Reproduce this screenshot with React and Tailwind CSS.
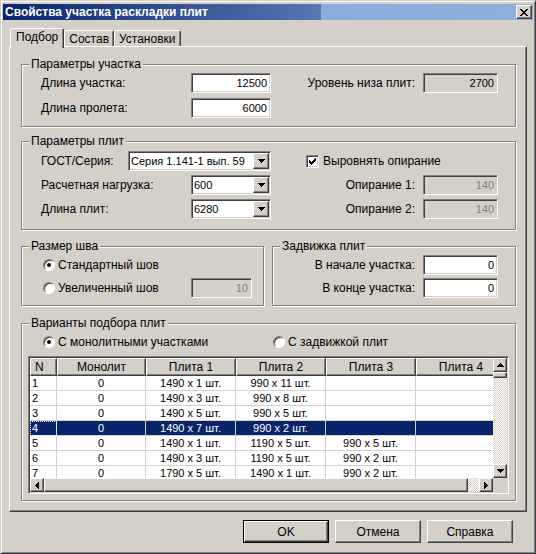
import React from "react";

// win2000 bevels
const sunken =
  "border border-t-[#808080] border-l-[#808080] border-r-white border-b-white shadow-[inset_1px_1px_0_#404040,inset_-1px_-1px_0_#d4d0c8]";
const raised =
  "border border-t-white border-l-white border-r-[#404040] border-b-[#404040] shadow-[inset_-1px_-1px_0_#808080]";
const etched = "border border-[#808080] shadow-[inset_1px_1px_0_#fff,1px_1px_0_#fff]";
const checker =
  "bg-[image:repeating-conic-gradient(#fff_0_25%,#d4d0c8_0_50%)] bg-size-[2px_2px] bg-[length:2px_2px]";

const cols = ["w-[27px]", "w-[89px]", "w-[90px]", "w-[90px]", "w-[90px]", "w-[90px]"];
const heads = ["N", "Монолит", "Плита 1", "Плита 2", "Плита 3", "Плита 4"];
const rows = [
  ["1", "0", "1490 x 1 шт.", "990 x 11 шт.", "", ""],
  ["2", "0", "1490 x 3 шт.", "990 x 8 шт.", "", ""],
  ["3", "0", "1490 x 5 шт.", "990 x 5 шт.", "", ""],
  ["4", "0", "1490 x 7 шт.", "990 x 2 шт.", "", ""],
  ["5", "0", "1490 x 1 шт.", "1190 x 5 шт.", "990 x 5 шт.", ""],
  ["6", "0", "1490 x 3 шт.", "1190 x 5 шт.", "990 x 2 шт.", ""],
  ["7", "0", "1790 x 5 шт.", "1490 x 1 шт.", "990 x 2 шт.", ""],
];

const Group = ({ title, className, children }) => (
  <div className={`relative ${etched} ${className}`}>
    <span className="absolute left-[7px] -top-[8px] bg-[#d4d0c8] px-[2px] leading-[14px]">
      {title}
    </span>
    {children}
  </div>
);

const Field = ({ value, w, gray, dim }) => (
  <div
    className={`${sunken} ${w} shrink-0 h-[20px] flex items-center justify-end pr-[3px] text-[11px] ${
      gray ? "bg-[#d4d0c8]" : "bg-white"
    } ${dim ? "text-[#808080]" : "text-black"}`}
  >
    {value}
  </div>
);

const Combo = ({ value, w }) => (
  <div className={`${sunken} ${w} shrink-0 h-[20px] p-[1px] bg-white flex items-center`}>
    <span className="flex-1 pl-[1px] text-[11px] whitespace-nowrap overflow-hidden">{value}</span>
    <div className={`${raised} w-[16px] h-[16px] bg-[#d4d0c8] flex items-center justify-center`}>
      <svg width="7" height="4" viewBox="0 0 7 4" shapeRendering="crispEdges">
        <path d="M0 0h7v1H0z M1 1h5v1H1z M2 2h3v1H2z M3 3h1v1H3z" fill="#000" />
      </svg>
    </div>
  </div>
);

const Check = () => (
  <div className={`${sunken} w-[13px] h-[13px] shrink-0 bg-white flex items-center justify-center`}>
    <svg width="7" height="7" viewBox="0 0 7 7" shapeRendering="crispEdges">
      <path
        d="M0 2h1v3H0z M1 3h1v3H1z M2 4h1v3H2z M3 3h1v3H3z M4 2h1v3H4z M5 1h1v3H5z M6 0h1v3H6z"
        fill="#000"
      />
    </svg>
  </div>
);

const Radio = ({ on }) => (
  <div className="w-[12px] h-[12px] shrink-0 rounded-full bg-white border border-t-[#808080] border-l-[#808080] border-r-white border-b-white shadow-[inset_1px_1px_0_#404040] flex items-center justify-center">
    {on && <div className="w-[4px] h-[4px] rounded-full bg-black" />}
  </div>
);

const Arrow = ({ dir }) => {
  const d = {
    up: "M3 0h1v1H3z M2 1h3v1H2z M1 2h5v1H1z M0 3h7v1H0z",
    down: "M0 0h7v1H0z M1 1h5v1H1z M2 2h3v1H2z M3 3h1v1H3z",
    left: "M3 0h1v7H3z M2 1h1v5H2z M1 2h1v3H1z M0 3h1v1H0z",
    right: "M0 0h1v7H0z M1 1h1v5H1z M2 2h1v3H2z M3 3h1v1H3z",
  };
  const vert = dir === "up" || dir === "down";
  return (
    <div className={`${raised} w-[14px] h-[14px] shrink-0 bg-[#d4d0c8] flex items-center justify-center`}>
      <svg
        width={vert ? 7 : 4}
        height={vert ? 4 : 7}
        viewBox={vert ? "0 0 7 4" : "0 0 4 7"}
        shapeRendering="crispEdges"
      >
        <path d={d[dir]} fill="#000" />
      </svg>
    </div>
  );
};

const Button = ({ children, def }) =>
  def ? (
    <div className="border border-black w-[86px] h-[23px]">
      <div className={`${raised} w-full h-full flex items-center justify-center`}>{children}</div>
    </div>
  ) : (
    <div className={`${raised} w-[86px] h-[23px] flex items-center justify-center`}>{children}</div>
  );

export default function App() {
  return (
    <div className="w-[536px] h-[554px] bg-[#d4d0c8] border border-t-[#d4d0c8] border-l-[#d4d0c8] border-r-[#404040] border-b-[#404040] shadow-[inset_1px_1px_0_#fff,inset_-1px_-1px_0_#808080] px-[2px] pt-[3px] flex flex-col text-[12px] leading-[14px] text-black font-['Liberation_Sans',Arial,sans-serif] select-none">
      {/* title bar */}
      <div className="h-[16px] flex items-center pl-[2px] pr-[1px] bg-[image:linear-gradient(to_right,#0a246a_0%,#5878b0_60%,#8aacdc_60%,#8cafde_100%)]">
        <span className="flex-1 text-white font-bold text-[12px]">Свойства участка раскладки плит</span>
        <div className={`${raised} w-[16px] h-[14px] bg-[#d4d0c8] flex items-center justify-center`}>
          <svg width="8" height="7" viewBox="0 0 8 7" shapeRendering="crispEdges">
            <path
              d="M0 0h2v1H0z M6 0h2v1H6z M1 1h2v1H1z M5 1h2v1H5z M2 2h4v1H2z M3 3h2v1H3z M2 4h4v1H2z M1 5h2v1H1z M5 5h2v1H5z M0 6h2v1H0z M6 6h2v1H6z"
              fill="#000"
            />
          </svg>
        </div>
      </div>

      <div className="px-[6px] mt-[8px]">
        {/* tabs */}
        <div className="flex items-end h-[18px] pl-[1px]">
          <div className="relative z-10 -mb-[2px] h-[20px] px-[5px] pt-[1px] bg-[#d4d0c8] border-t border-l border-r border-t-white border-l-white border-r-[#404040] shadow-[inset_-1px_0_0_#808080] rounded-t-[2px]">
            Подбор
          </div>
          <div className="h-[16px] px-[4px] pt-[1px] border-t border-l border-r border-t-white border-l-white border-r-[#404040] shadow-[inset_-1px_0_0_#808080] rounded-t-[2px]">
            Состав
          </div>
          <div className="h-[16px] px-[4px] pt-[1px] border-t border-l border-r border-t-white border-l-white border-r-[#404040] shadow-[inset_-1px_0_0_#808080] rounded-t-[2px]">
            Установки
          </div>
        </div>

        {/* tab page */}
        <div className="w-[518px] h-[466px] border border-t-white border-l-white border-r-[#404040] border-b-[#404040] shadow-[inset_-1px_-1px_0_#808080] pl-[11px] pt-[17px]">
          <Group title="Параметры участка" className="w-[495px] h-[63px] pt-[8px] pl-[19px]">
            <div className="flex items-center h-[20px]">
              <span className="w-[150px] shrink-0">Длина участка:</span>
              <Field w="w-[80px]" value="12500" />
              <span className="w-[152px] shrink-0 text-right pr-[8px]">Уровень низа плит:</span>
              <Field w="w-[75px]" value="2700" gray />
            </div>
            <div className="flex items-center h-[20px] mt-[5px]">
              <span className="w-[150px] shrink-0">Длина пролета:</span>
              <Field w="w-[80px]" value="6000" />
            </div>
          </Group>

          <Group title="Параметры плит" className="mt-[14px] w-[495px] h-[89px] pt-[9px] pl-[19px]">
            <div className="flex items-center h-[20px]">
              <span className="w-[87px] shrink-0">ГОСТ/Серия:</span>
              <Combo w="w-[143px]" value="Серия 1.141-1 вып. 59" />
              <div className="w-[35px] shrink-0" />
              <Check />
              <span className="ml-[4px]">Выровнять опирание</span>
            </div>
            <div className="flex items-center h-[20px] mt-[4px]">
              <span className="w-[150px] shrink-0">Расчетная нагрузка:</span>
              <Combo w="w-[80px]" value="600" />
              <span className="w-[152px] shrink-0 text-right pr-[8px]">Опирание 1:</span>
              <Field w="w-[75px]" value="140" gray dim />
            </div>
            <div className="flex items-center h-[20px] mt-[4px]">
              <span className="w-[150px] shrink-0">Длина плит:</span>
              <Combo w="w-[80px]" value="6280" />
              <span className="w-[152px] shrink-0 text-right pr-[8px]">Опирание 2:</span>
              <Field w="w-[75px]" value="140" gray dim />
            </div>
          </Group>

          <div className="mt-[16px] flex gap-[8px]">
            <Group title="Размер шва" className="w-[243px] h-[60px] pt-[8px] pl-[21px]">
              <div className="flex items-center h-[20px]">
                <Radio on />
                <span className="ml-[3px]">Стандартный шов</span>
              </div>
              <div className="flex items-center h-[20px] mt-[3px]">
                <Radio />
                <span className="ml-[3px] w-[133px] shrink-0">Увеличенный шов</span>
                <Field w="w-[61px]" value="10" gray dim />
              </div>
            </Group>
            <Group title="Задвижка плит" className="w-[244px] h-[60px] pt-[8px]">
              <div className="flex items-center h-[20px]">
                <span className="w-[150px] shrink-0 text-right pr-[8px]">В начале участка:</span>
                <Field w="w-[75px]" value="0" />
              </div>
              <div className="flex items-center h-[20px] mt-[3px]">
                <span className="w-[150px] shrink-0 text-right pr-[8px]">В конце участка:</span>
                <Field w="w-[75px]" value="0" />
              </div>
            </Group>
          </div>

          <Group title="Варианты подбора плит" className="mt-[17px] w-[495px] h-[178px] pt-[11px] pl-[6px]">
            <div className="flex items-center h-[14px] pl-[15px]">
              <div className="w-[230px] shrink-0 flex items-center">
                <Radio on />
                <span className="ml-[3px]">С монолитными участками</span>
              </div>
              <div className="flex items-center">
                <Radio />
                <span className="ml-[3px]">С задвижкой плит</span>
              </div>
            </div>

            {/* list view */}
            <div
              className={`${sunken} mt-[7px] w-[481px] h-[138px] bg-white p-[1px] grid grid-cols-[1fr_14px] grid-rows-[1fr_14px]`}
            >
              <div className="overflow-hidden bg-white">
                <div className="flex h-[18px]">
                  {heads.map((h, i) => (
                    <div
                      key={h}
                      className={`${raised} ${cols[i]} shrink-0 bg-[#d4d0c8] flex items-center ${
                        i === 0 ? "pl-[4px]" : "justify-center"
                      }`}
                    >
                      {h}
                    </div>
                  ))}
                </div>
                {rows.map((r, ri) => {
                  const sel = ri === 3;
                  return (
                    <div
                      key={ri}
                      className={`flex h-[15px] text-[11px] leading-[13px] ${
                        sel ? "bg-[#0a246a] text-white" : "bg-white text-black"
                      }`}
                    >
                      {r.map((c, ci) => (
                        <div
                          key={ci}
                          className={`${cols[ci]} shrink-0 border-r border-b border-[#d4d0c8] flex items-center whitespace-nowrap ${
                            ci === 0 ? "pl-[2px]" : "justify-center"
                          } ${sel && ci === 0 ? "outline-1 outline-dotted outline-white -outline-offset-1" : ""}`}
                        >
                          {c}
                        </div>
                      ))}
                    </div>
                  );
                })}
              </div>

              <div className="flex flex-col">
                <Arrow dir="up" />
                <div className={`${raised} h-[6px] shrink-0 bg-[#d4d0c8]`} />
                <div className={`flex-1 ${checker}`} />
                <Arrow dir="down" />
              </div>

              <div className="flex">
                <Arrow dir="left" />
                <div className={`${raised} w-[424px] shrink-0 bg-[#d4d0c8]`} />
                <div className={`flex-1 ${checker}`} />
                <Arrow dir="right" />
              </div>
              <div className="bg-[#d4d0c8]" />
            </div>
          </Group>
        </div>

        <div className="flex justify-end gap-[6px] pr-[14px] mt-[8px]">
          <Button def>OK</Button>
          <Button>Отмена</Button>
          <Button>Справка</Button>
        </div>
      </div>
    </div>
  );
}
